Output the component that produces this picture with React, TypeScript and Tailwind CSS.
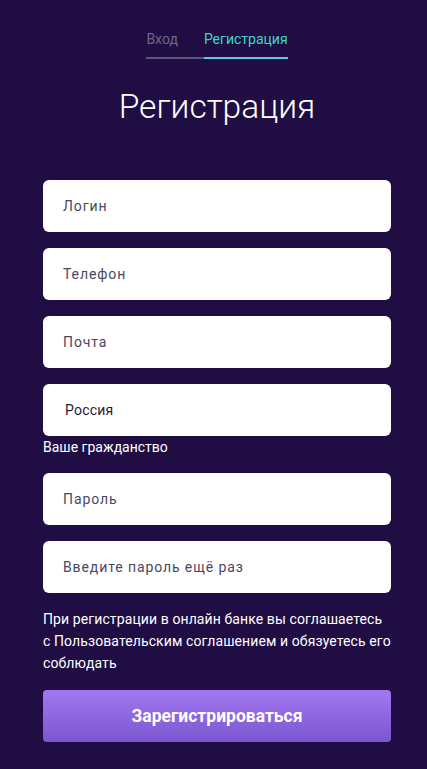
import React from "react";

const fields1 = ["Логин", "Телефон", "Почта"];

function Field({ text, dark }: { text: string; dark?: boolean }) {
  return (
    <div className="h-[52px] w-full rounded-[6px] bg-white flex items-center">
      <span
        className={
          dark
            ? "pl-[22px] text-[14px] text-[#1e1b3a] tracking-[0.2px]"
            : "pl-[20px] text-[14px] text-[#4a4760] tracking-[0.9px]"
        }
      >
        {text}
      </span>
    </div>
  );
}

export default function App() {
  return (
    <div
      className="h-[769px] w-full overflow-hidden bg-[#200d44] flex flex-col items-center pl-[7px]"
      style={{ fontFamily: "Roboto, 'Noto Sans', sans-serif" }}
    >
      <div className="mt-[29px] flex text-[14px] leading-[20px]">
        <div className="flex flex-col">
          <span className="text-[#6e6883] pr-[26px]">Вход</span>
          <div className="mt-[8px] h-[2px] bg-[#5b5574]" />
        </div>
        <div className="flex flex-col">
          <span className="text-[#3fd6c6]">Регистрация</span>
          <div className="mt-[8px] h-[2px] bg-[#5ec9e4]" />
        </div>
      </div>
      <h1 className="mt-[26px] text-[33.5px] font-light text-white leading-[44px]">
        Регистрация
      </h1>
      <div className="mt-[51px] w-[348px] flex flex-col">
        <div className="flex flex-col gap-[16px]">
          {fields1.map((f) => (
            <Field key={f} text={f} />
          ))}
          <div className="flex flex-col">
            <Field text="Россия" dark />
            <span className="mt-[1px] text-[14px] leading-[20px] text-white">
              Ваше гражданство
            </span>
          </div>
        </div>
        <div className="mt-[16px] flex flex-col gap-[16px]">
          <Field text="Пароль" />
          <Field text="Введите пароль ещё раз" />
        </div>
        <p className="mt-[15px] text-[14px] leading-[22px] text-white whitespace-nowrap tracking-[0.1px]">
          При регистрации в онлайн банке вы соглашаетесь
          <br />с Пользовательским соглашением и обязуетесь его
          <br />
          соблюдать
        </p>
        <button className="mt-[16px] h-[52px] w-full rounded-[4px] bg-gradient-to-b from-[#a477f2] to-[#7a57cf] text-white font-bold text-[17.5px]">
          Зарегистрироваться
        </button>
      </div>
    </div>
  );
}
